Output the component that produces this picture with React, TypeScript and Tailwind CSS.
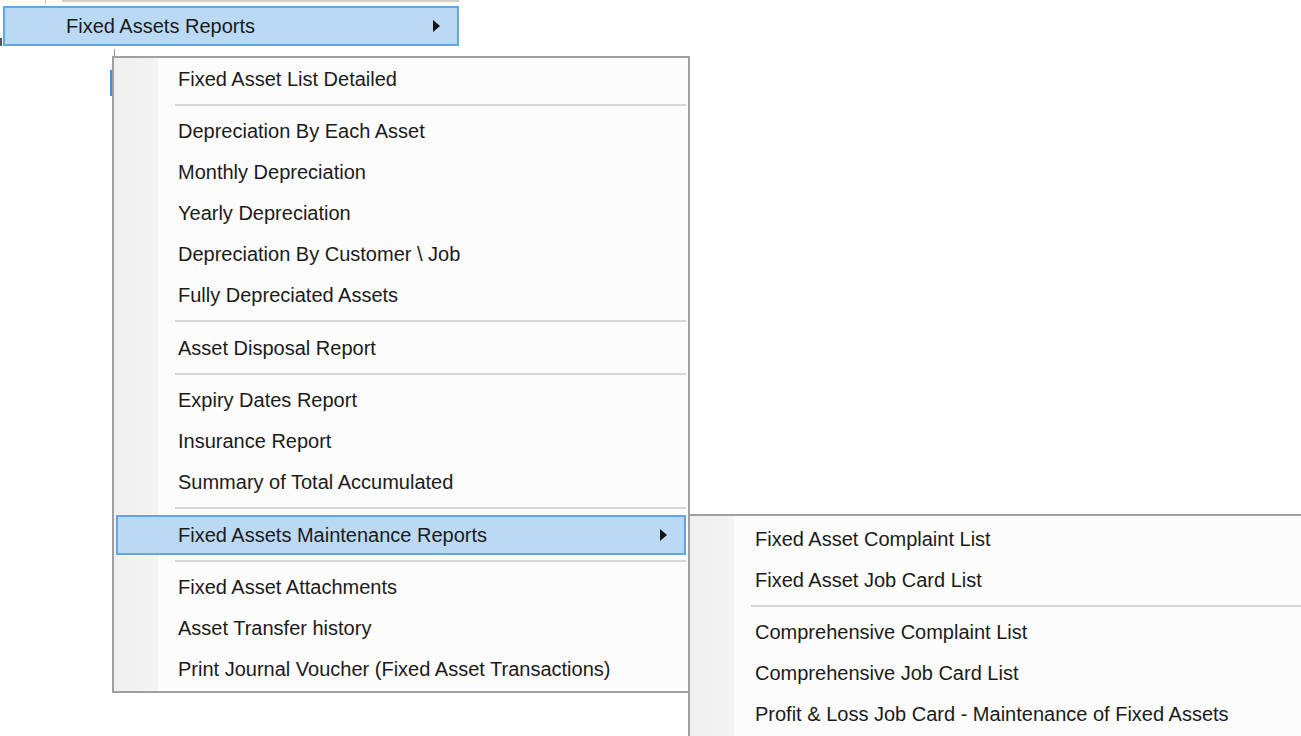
import React from "react";

type Entry = { label?: string; sep?: number; active?: boolean; arrow?: boolean };

const mainItems: Entry[] = [
  { label: "Fixed Asset List Detailed" },
  { sep: 11 },
  { label: "Depreciation By Each Asset" },
  { label: "Monthly Depreciation" },
  { label: "Yearly Depreciation" },
  { label: "Depreciation By Customer \\ Job" },
  { label: "Fully Depreciated Assets" },
  { sep: 12 },
  { label: "Asset Disposal Report" },
  { sep: 11 },
  { label: "Expiry Dates Report" },
  { label: "Insurance Report" },
  { label: "Summary of Total Accumulated" },
  { sep: 12 },
  { label: "Fixed Assets Maintenance Reports", active: true, arrow: true },
  { sep: 11 },
  { label: "Fixed Asset Attachments" },
  { label: "Asset Transfer history" },
  { label: "Print Journal Voucher (Fixed Asset Transactions)" },
];

const subItems: Entry[] = [
  { label: "Fixed Asset Complaint List" },
  { label: "Fixed Asset Job Card List" },
  { sep: 11 },
  { label: "Comprehensive Complaint List" },
  { label: "Comprehensive Job Card List" },
  { label: "Profit & Loss Job Card - Maintenance of Fixed Assets" },
];

function Arrow() {
  return (
    <svg width="7" height="12" viewBox="0 0 7 12" className="block">
      <path d="M0 0 L7 6 L0 12 Z" fill="#111" />
    </svg>
  );
}

function MenuList({ items, textPad }: { items: Entry[]; textPad: string }) {
  return (
    <div className="flex flex-col">
      {items.map((it, i) =>
        it.sep ? (
          <div key={i} className="flex flex-col pt-[5px]" style={{ height: it.sep }}>
            <div className="ml-[61px] mr-[2px] h-[2px] bg-[#d6d6d6]" />
          </div>
        ) : it.active ? (
          <div key={i} className="flex h-[41px] items-center px-[2px]">
            <div className="flex h-[40px] flex-1 items-center border-2 border-[#64a6e3] bg-[#bad9f5]">
              <span className="flex-1 whitespace-nowrap pl-[60px] text-[20px] text-[#1b1b1b]">{it.label}</span>
              <div className="mr-[17px]">
                <Arrow />
              </div>
            </div>
          </div>
        ) : (
          <div key={i} className="flex h-[41px] items-center">
            <span className={`${textPad} whitespace-nowrap text-[20px] text-[#1b1b1b]`}>{it.label}</span>
          </div>
        )
      )}
    </div>
  );
}

export default function App() {
  return (
    <div
      className="relative h-[736px] w-[1301px] overflow-hidden bg-white"
      style={{ fontFamily: '"Liberation Sans", Arial, sans-serif' }}
    >
      {/* faint remnants of the parent menu */}
      <div className="absolute left-[62px] top-0 h-[2px] w-[397px] bg-[#cfcfcf]" />
      <div className="absolute left-[45px] top-0 h-[4px] w-[1px] bg-[#bdbdbd]" />
      <div className="absolute left-0 top-[38px] h-[8px] w-[2px] bg-[#555]" />

      {/* parent highlighted item */}
      <div className="pl-[3px] pt-[6px]">
        <div className="flex h-[40px] w-[456px] items-center border-2 border-[#64a6e3] bg-[#bad9f5]">
          <span className="flex-1 whitespace-nowrap pl-[61px] text-[20px] text-[#1b1b1b]">Fixed Assets Reports</span>
          <div className="mr-[17px]">
            <Arrow />
          </div>
        </div>
      </div>

      {/* main dropdown */}
      <div className="relative ml-[112px] mt-[10px] w-[578px]">
        <div className="absolute -left-[2px] top-[14px] h-[26px] w-[2px] bg-[#3f8fdc]" />
        <div className="absolute left-[2px] -top-[7px] h-[7px] w-[1px] bg-[#9a9a9a]" />
        <div className="relative border-2 border-[#a0a0a0] bg-[#fcfcfc] pb-[2px]">
          <div className="absolute bottom-0 left-0 top-0 w-[44px] bg-gradient-to-r from-[#efefef] to-[#f4f4f4]" />
          <div className="relative">
            <MenuList items={mainItems} textPad="pl-[64px]" />
          </div>
        </div>
      </div>

      {/* submenu */}
      <div className="absolute left-[688px] top-[514px] h-[240px] w-[640px] border-l-2 border-t-2 border-[#a0a0a0] bg-[#fcfcfc] pt-[2px]">
        <div className="absolute bottom-0 left-0 top-0 w-[44px] bg-gradient-to-r from-[#efefef] to-[#f4f4f4]" />
        <div className="relative">
          <MenuList items={subItems} textPad="pl-[65px]" />
        </div>
      </div>
    </div>
  );
}
